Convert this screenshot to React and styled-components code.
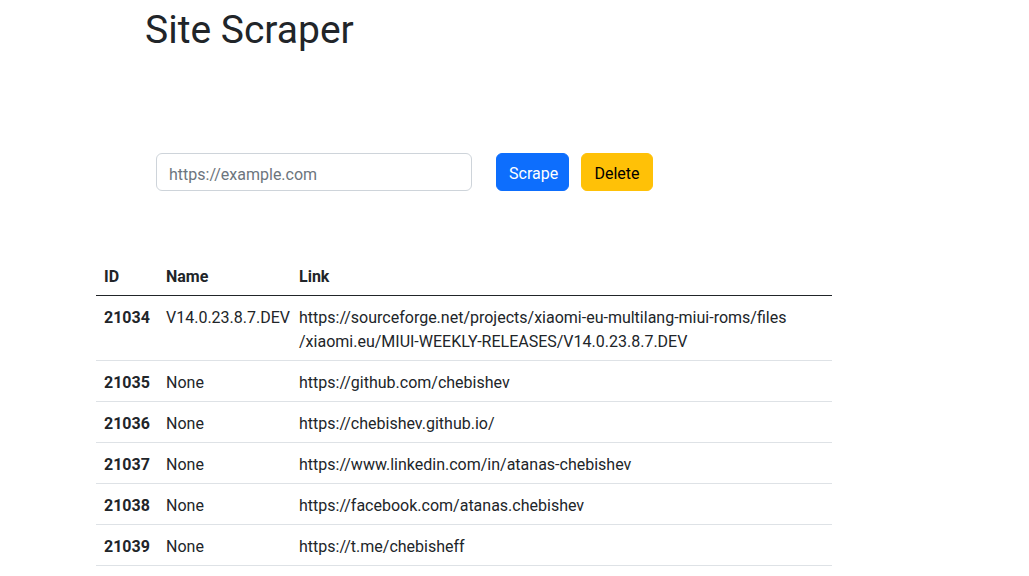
import React from 'react';
import styled, { createGlobalStyle } from 'styled-components';

const GlobalStyle = createGlobalStyle`
    body {
        margin: 0;
        font-family: Roboto, "Noto Sans", sans-serif;
        font-size: 16px;
        line-height: 1.5;
        color: #212529;
        background: #fff;
    }
    * { box-sizing: border-box; }
`;

const Page = styled.div`
    display: flex;
    flex-direction: column;
    align-items: flex-start;
    padding: 6px 0 0 96px;
`;

const Title = styled.h1`
    margin: 0 0 0 49px;
    font-size: 39px;
    font-weight: 400;
    line-height: 48px;
    color: #212529;
`;

const ScrapeForm = styled.form`
    display: flex;
    align-items: center;
    margin: 99px 0 0 60px;
`;

const UrlInput = styled.input`
    width: 316px;
    height: 38px;
    padding: 8px 12px 4px;
    font: inherit;
    color: #212529;
    border: 1px solid #ced4da;
    border-radius: 6px;
    outline: none;
    &::placeholder { color: #6c757d; }
`;

const Button = styled.button`
    height: 38px;
    width: ${p => p.w}px;
    margin-left: ${p => p.gap}px;
    padding: 8px 12px 4px;
    font: inherit;
    color: ${p => p.fg};
    background: ${p => p.bg};
    border: 1px solid ${p => p.bg};
    border-radius: 6px;
    cursor: pointer;
`;

const Table = styled.table`
    margin-top: 64px;
    width: 736px;
    table-layout: fixed;
    border-collapse: collapse;
    color: #212529;
`;

const HeadCell = styled.th`
    width: ${p => p.w ? `${p.w}px` : 'auto'};
    padding: 10px 8px 6px;
    text-align: left;
    font-weight: 700;
    border-bottom: 1px solid #212529;
`;

const Row = styled.tr`
    border-bottom: 1px solid #dee2e6;
`;

const Cell = styled.td`
    padding: 10px 8px 6px;
    vertical-align: top;
    font-weight: ${p => p.bold ? 700 : 400};
`;

const rows = [
    { id: 21034, name: 'V14.0.23.8.7.DEV', link: ['https://sourceforge.net/projects/xiaomi-eu-multilang-miui-roms/files', '/xiaomi.eu/MIUI-WEEKLY-RELEASES/V14.0.23.8.7.DEV'] },
    { id: 21035, name: 'None', link: ['https://github.com/chebishev'] },
    { id: 21036, name: 'None', link: ['https://chebishev.github.io/'] },
    { id: 21037, name: 'None', link: ['https://www.linkedin.com/in/atanas-chebishev'] },
    { id: 21038, name: 'None', link: ['https://facebook.com/atanas.chebishev'] },
    { id: 21039, name: 'None', link: ['https://t.me/chebisheff'] },
];

const App = () => {
    return (
        <Page>
            <GlobalStyle />
            <Title>Site Scraper</Title>
            <ScrapeForm onSubmit={e => e.preventDefault()}>
                <UrlInput type="text" placeholder="https://example.com" />
                <Button w={73} gap={24} bg="#0d6efd" fg="#fff">Scrape</Button>
                <Button w={72} gap={12} bg="#ffc107" fg="#000">Delete</Button>
            </ScrapeForm>
            <Table>
                <thead>
                    <tr>
                        <HeadCell w={62}>ID</HeadCell>
                        <HeadCell w={133}>Name</HeadCell>
                        <HeadCell>Link</HeadCell>
                    </tr>
                </thead>
                <tbody>
                    {rows.map(r => (
                        <Row key={r.id}>
                            <Cell bold>{r.id}</Cell>
                            <Cell>{r.name}</Cell>
                            <Cell>
                                {r.link.map((part, i) => (
                                    <React.Fragment key={i}>
                                        {i > 0 && <br />}
                                        {part}
                                    </React.Fragment>
                                ))}
                            </Cell>
                        </Row>
                    ))}
                </tbody>
            </Table>
        </Page>
    );
}
export default App;
